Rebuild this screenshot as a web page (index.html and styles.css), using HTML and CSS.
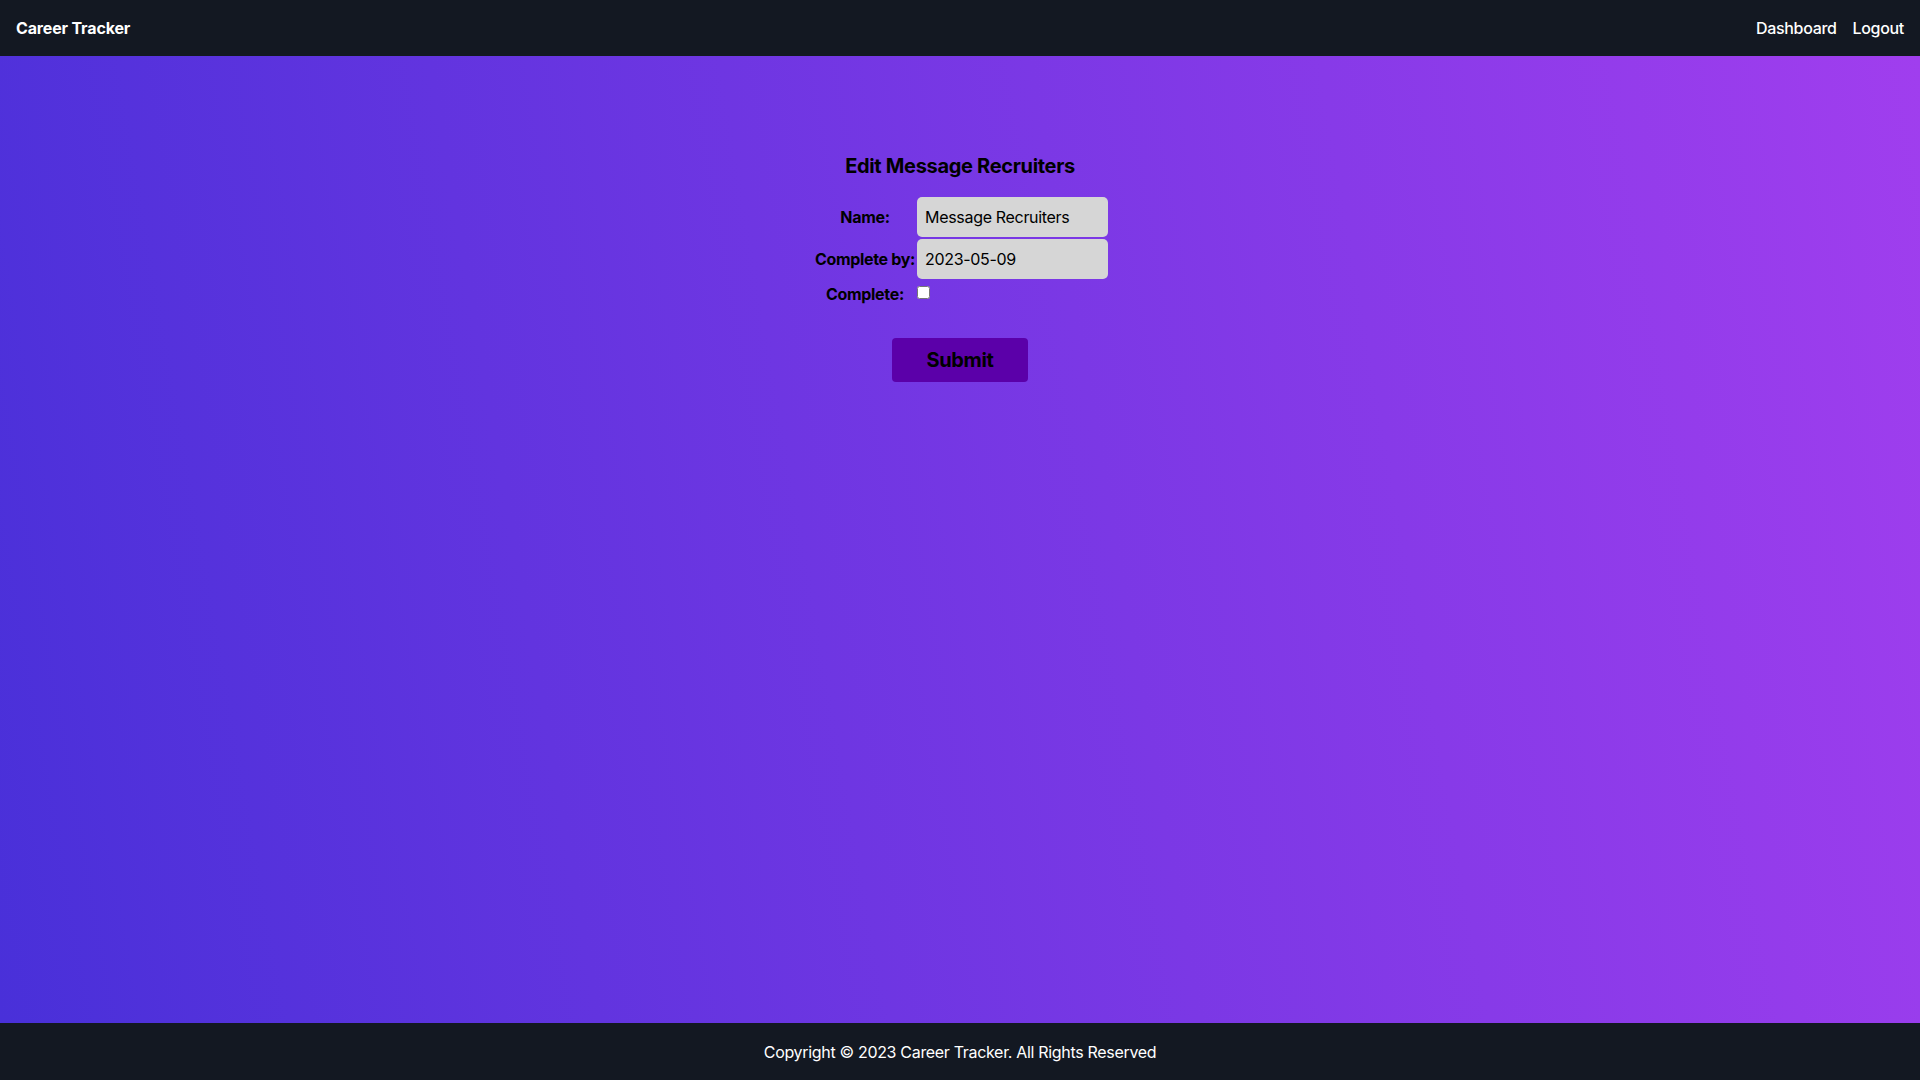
FILE: index.html
```html
<!DOCTYPE html>
<html lang="en">
<head>
<meta charset="utf-8">
<title>Career Tracker</title>
<link rel="stylesheet" href="styles.css">
</head>
<body>
<header class="topbar">
  <a class="brand" href="#">Career Tracker</a>
  <nav class="nav">
    <a href="#">Dashboard</a>
    <a href="#">Logout</a>
  </nav>
</header>
<main class="main">
  <form class="edit-form">
    <h2 class="title">Edit Message Recruiters</h2>
    <table class="fields">
      <tr>
        <th><label for="name">Name:</label></th>
        <td><input id="name" class="field" type="text" value="Message Recruiters"></td>
      </tr>
      <tr>
        <th><label for="due">Complete by:</label></th>
        <td><input id="due" class="field" type="text" value="2023-05-09"></td>
      </tr>
      <tr>
        <th><label for="done">Complete:</label></th>
        <td><input id="done" class="check" type="checkbox"></td>
      </tr>
    </table>
    <button class="submit" type="button">Submit</button>
  </form>
</main>
<footer class="footer">Copyright © 2023 Career Tracker. All Rights Reserved</footer>
</body>
</html>
```

FILE: styles.css
```css
* { box-sizing: border-box; }
html, body { height: 100%; }
body {
  margin: 0;
  display: flex;
  flex-direction: column;
  min-height: 100vh;
  font-family: Inter, "Liberation Sans", sans-serif;
  font-size: 16px;
  line-height: 24px;
  letter-spacing: -0.02em;
  color: #000;
}
.topbar {
  height: 56px;
  flex: 0 0 56px;
  background: #131822;
  display: flex;
  align-items: center;
  justify-content: space-between;
  padding: 0 16px;
}
.brand {
  color: #fff;
  text-decoration: none;
  font-weight: 700;
  font-size: 16px;
  letter-spacing: -0.01em;
}
.nav { display: flex; gap: 16px; }
.nav a {
  color: #fff;
  text-decoration: none;
  font-weight: 500;
}
.main {
  flex: 1;
  background: linear-gradient(80deg, #4930d9 0%, #a03eee 100%);
  display: flex;
  justify-content: center;
  padding-top: 96px;
}
.edit-form {
  display: flex;
  flex-direction: column;
  align-items: center;
}
.title {
  margin: 0 0 15px;
  font-size: 20px;
  line-height: 28px;
  font-weight: 700;
}
.fields {
  border-spacing: 2px;
}
.fields th {
  font-weight: 700;
  text-align: center;
  padding: 1px 0 1px 3px;
  white-space: nowrap;
}
.fields td { padding: 0; }
.field {
  display: block;
  width: 191px;
  height: 40px;
  border: none;
  border-radius: 5px;
  background: #d6d6d6;
  padding: 8px;
  font-family: inherit;
  font-size: 16px;
  letter-spacing: -0.02em;
  color: #000;
}
.check {
  display: block;
  margin: -3px 0 0;
  width: 13px;
  height: 13px;
}
.submit {
  margin-top: 29px;
  background: #5b00a9;
  border: none;
  border-radius: 4px;
  padding: 8px 0;
  width: 136px;
  height: 44px;
  font-family: inherit;
  font-size: 20px;
  line-height: 28px;
  font-weight: 700;
  letter-spacing: -0.02em;
  color: #000;
}
.footer {
  height: 57px;
  flex: 0 0 57px;
  background: #131822;
  color: #fff;
  display: flex;
  align-items: center;
  justify-content: center;
}
```
